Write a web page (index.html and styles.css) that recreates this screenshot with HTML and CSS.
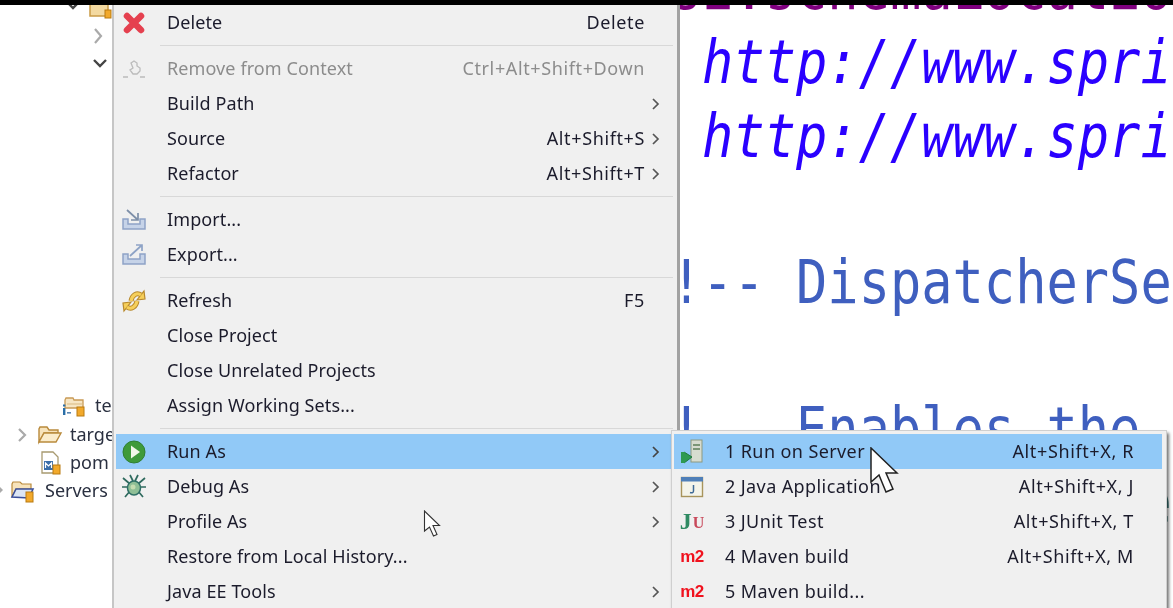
FILE: index.html
```html
<!DOCTYPE html>
<html lang="en">
<head>
<meta charset="utf-8">
<title>Eclipse context menu</title>
<link rel="stylesheet" href="styles.css">
</head>
<body>
<div class="app">
  <div class="topbar"></div>
  <div class="main">
    <aside class="tree">
      <div class="tree-first">
        <svg class="chev" width="14" height="10" viewBox="0 0 14 10"><path d="M2 1l5 5 5-5" fill="none" stroke="#444" stroke-width="2.4"/></svg>
        <svg width="24" height="18" viewBox="0 0 24 18"><path d="M1 1h18v13H1z" fill="#f3d9a0" stroke="#c99a45" stroke-width="1.5"/><rect x="16" y="8" width="6" height="8" fill="#f2a92b" stroke="#b97a10"/></svg>
      </div>
      <div class="tree-row ind-a"><svg width="12" height="18" viewBox="0 0 12 18"><path d="M3 2l6 7-6 7" fill="none" stroke="#aaa" stroke-width="2.2"/></svg></div>
      <div class="tree-row ind-a"><svg width="16" height="12" viewBox="0 0 16 12"><path d="M2 2l6 6 6-6" fill="none" stroke="#444" stroke-width="2.4"/></svg></div>
      <div class="tree-row tree-te">
        <svg width="26" height="22" viewBox="0 0 26 22"><path d="M3 5l1-2h7l1 2h9v8H3z" fill="#f7e6c4" stroke="#c99a55" stroke-width="1.3"/><path d="M5 9h16" stroke="#d9b980"/><rect x="1" y="13" width="2.4" height="7" fill="#2a6fa8"/><rect x="1" y="9.5" width="2.4" height="2" fill="#2a6fa8"/><rect x="5" y="17" width="4" height="1.6" fill="#5b86b0"/><rect x="15" y="12" width="7" height="9" fill="#f2a92b" stroke="#b97a10"/></svg>
        <span>te</span>
      </div>
      <div class="tree-row tree-target">
        <svg width="12" height="16" viewBox="0 0 12 16"><path d="M2 2l6 6-6 6" fill="none" stroke="#aaa" stroke-width="2.2"/></svg>
        <svg width="26" height="20" viewBox="0 0 26 20"><path d="M2 17V4l1-2h7l2 3h9v3H7z" fill="#f7e3bb" stroke="#b98a3c" stroke-width="1.4"/><path d="M2 17l5-9h17l-5 9z" fill="#fbeccb" stroke="#b98a3c" stroke-width="1.4"/></svg>
        <span>targe</span>
      </div>
      <div class="tree-row tree-pom">
        <svg width="20" height="24" viewBox="0 0 20 24"><path d="M1 1h11l5 5v16H1z" fill="#fff" stroke="#a89a70" stroke-width="1.3"/><rect x="3" y="10" width="9" height="9" fill="#3a6ea8"/><path d="M4.500 17v-5l3 3 3-3v5" fill="none" stroke="#fff" stroke-width="1.200"/><rect x="12" y="14" width="7" height="9" fill="#f2a92b" stroke="#b97a10"/></svg>
        <span>pom</span>
      </div>
      <div class="tree-row tree-servers">
        <svg width="35" height="24" viewBox="0 0 35 24"><path d="M0 8l3 3-3 3z" fill="#aaa"/><path d="M12 18V5l1-2h7l2 2h9v5H16z" fill="#f7e3bb" stroke="#b98a3c" stroke-width="1.200"/><path d="M12 18l4-8h17l-4 9z" fill="#dce6f5" stroke="#3a4f9a" stroke-width="1.600"/><rect x="26" y="13" width="7" height="10" fill="#f2a92b" stroke="#b97a10"/></svg>
        <span>Servers</span>
      </div>
    </aside>

    <nav class="menu">
      <div class="item"><span class="ico"><svg width="24" height="24" viewBox="0 0 24 24"><path d="M5 5l14 14M19 5L5 19" stroke="#e5404f" stroke-width="6.500" stroke-linecap="round"/></svg></span><span class="label">Delete</span><span class="keys">Delete</span><span class="more"></span></div>
      <div class="sep"></div>
      <div class="item off"><span class="ico"><svg width="24" height="22" viewBox="0 0 24 22"><path d="M9 5l3-2 3 2v3l3 2v3l-3 3h-4l-3-4 3-2z" fill="none" stroke="#bbb" stroke-width="1.300"/><path d="M1 19h5M18 19h5" stroke="#bbb" stroke-width="1.300"/></svg></span><span class="label">Remove from Context</span><span class="keys">Ctrl+Alt+Shift+Down</span><span class="more"></span></div>
      <div class="item"><span class="ico"></span><span class="label">Build Path</span><span class="keys"></span><span class="more"><svg class="arrow" width="10" height="14" viewBox="0 0 10 14"><path d="M2 2l5 5-5 5" fill="none" stroke="#555" stroke-width="1.700"/></svg></span></div>
      <div class="item"><span class="ico"></span><span class="label">Source</span><span class="keys">Alt+Shift+S</span><span class="more"><svg class="arrow" width="10" height="14" viewBox="0 0 10 14"><path d="M2 2l5 5-5 5" fill="none" stroke="#555" stroke-width="1.700"/></svg></span></div>
      <div class="item"><span class="ico"></span><span class="label">Refactor</span><span class="keys">Alt+Shift+T</span><span class="more"><svg class="arrow" width="10" height="14" viewBox="0 0 10 14"><path d="M2 2l5 5-5 5" fill="none" stroke="#555" stroke-width="1.700"/></svg></span></div>
      <div class="sep"></div>
      <div class="item"><span class="ico"><svg width="26" height="26" viewBox="0 0 26 26"><path d="M2 12h5v5h12v-5h5v10H2z" fill="#c6d3e8" stroke="#8ea3c6" stroke-width="1.500"/><path d="M6 3l11 10M17 6v7h-7" fill="none" stroke="#7d8fa8" stroke-width="1.700"/></svg></span><span class="label">Import...</span><span class="keys"></span><span class="more"></span></div>
      <div class="item"><span class="ico"><svg width="26" height="26" viewBox="0 0 26 26"><path d="M2 12h5v5h12v-5h5v10H2z" fill="#c6d3e8" stroke="#8ea3c6" stroke-width="1.500"/><path d="M9 14L21 3M15 3h6v6" fill="none" stroke="#8ea3c6" stroke-width="1.700"/></svg></span><span class="label">Export...</span><span class="keys"></span><span class="more"></span></div>
      <div class="sep"></div>
      <div class="item"><span class="ico"><svg width="26" height="26" viewBox="0 0 26 26"><path d="M10 13C11 7 16 4 20 7M16 13C15 19 10 22 6 19" fill="none" stroke="#b8892c" stroke-width="5"/><path d="M16 12l8-1-1-8zM10 14l-8 1 1 8z" fill="#f6cf5a" stroke="#b8892c" stroke-width="1.200"/><path d="M10 13C11 7 16 4 20 7M16 13C15 19 10 22 6 19" fill="none" stroke="#f6cf5a" stroke-width="3"/></svg></span><span class="label">Refresh</span><span class="keys">F5</span><span class="more"></span></div>
      <div class="item"><span class="ico"></span><span class="label">Close Project</span><span class="keys"></span><span class="more"></span></div>
      <div class="item"><span class="ico"></span><span class="label">Close Unrelated Projects</span><span class="keys"></span><span class="more"></span></div>
      <div class="item"><span class="ico"></span><span class="label">Assign Working Sets...</span><span class="keys"></span><span class="more"></span></div>
      <div class="sep"></div>
      <div class="item active"><span class="ico"><svg width="24" height="24" viewBox="-1 0 24 24"><circle cx="11" cy="12" r="11" fill="#3f9a3a" stroke="#2f7f34"/><path d="M8 5.500l9 6.500-9 6.500z" fill="#f2f7e8"/></svg></span><span class="label">Run As</span><span class="keys"></span><span class="more"><svg class="arrow" width="10" height="14" viewBox="0 0 10 14"><path d="M2 2l5 5-5 5" fill="none" stroke="#444" stroke-width="1.700"/></svg></span></div>
      <div class="item"><span class="ico"><svg width="26" height="26" viewBox="0 0 26 26"><path d="M2 4l7 6M24 4l-7 6M1 13h6M25 13h-6M4 23l5-6M22 23l-5-6M9 1l3 6M17 1l-3 6" stroke="#2f6a5e" stroke-width="1.700"/><ellipse cx="13" cy="14" rx="6.500" ry="7" fill="#8fbf96" stroke="#2f6f66" stroke-width="1.500"/><circle cx="12" cy="13" r="2.500" fill="#c5dcb0"/></svg></span><span class="label">Debug As</span><span class="keys"></span><span class="more"><svg class="arrow" width="10" height="14" viewBox="0 0 10 14"><path d="M2 2l5 5-5 5" fill="none" stroke="#555" stroke-width="1.700"/></svg></span></div>
      <div class="item"><span class="ico"></span><span class="label">Profile As</span><span class="keys"></span><span class="more"><svg class="arrow" width="10" height="14" viewBox="0 0 10 14"><path d="M2 2l5 5-5 5" fill="none" stroke="#555" stroke-width="1.700"/></svg></span></div>
      <div class="item"><span class="ico"></span><span class="label">Restore from Local History...</span><span class="keys"></span><span class="more"></span></div>
      <div class="item"><span class="ico"></span><span class="label">Java EE Tools</span><span class="keys"></span><span class="more"><svg class="arrow" width="10" height="14" viewBox="0 0 10 14"><path d="M2 2l5 5-5 5" fill="none" stroke="#555" stroke-width="1.700"/></svg></span></div>
    </nav>

    <section class="editor">
      <pre class="code"><span class="attr">xsi:schemaLocation="</span>
<span class="val">  http://www.springframework.org/schema/mvc</span>
<span class="val">  http://www.springframework.org/schema/beans</span>

<span class="cmt">&lt;!-- DispatcherServlet Context --&gt;</span>

<span class="cmt">&lt;!-- Enables the Spring MVC --&gt;</span>
<span class="tag">&lt;annotation-driven /&gt;</span></pre>
    </section>
  </div>

  <div class="submenu">
    <div class="item active"><span class="ico"><svg width="24" height="26" viewBox="0 0 24 26"><rect x="11" y="1" width="11" height="22" fill="#d7dccf" stroke="#8d9a80"/><path d="M13 6h7M13 10h7" stroke="#5f7f5a" stroke-width="1.700"/><path d="M4 13l8 5-8 6z" fill="#2f9a52" stroke="#1f7a3e"/><rect x="1" y="13" width="4" height="11" fill="#2f9a52"/></svg></span><span class="label">1 Run on Server</span><span class="keys">Alt+Shift+X, R</span><span class="more"></span></div>
    <div class="item"><span class="ico"><svg width="24" height="22" viewBox="0 0 24 22"><rect x="1.500" y="1.500" width="21" height="19" fill="#f4f4ea" stroke="#a8945c" stroke-width="1.400"/><rect x="1" y="1" width="22" height="4.500" fill="#4f7fb8"/><path d="M13.500 9v6c0 2-2 2-3.500 1.500" fill="none" stroke="#3f6a96" stroke-width="1.500"/></svg></span><span class="label">2 Java Application</span><span class="keys">Alt+Shift+X, J</span><span class="more"></span></div>
    <div class="item"><span class="ico ju"><b class="ju-j">J</b><b class="ju-u">U</b></span><span class="label">3 JUnit Test</span><span class="keys">Alt+Shift+X, T</span><span class="more"></span></div>
    <div class="item"><span class="ico m2">m2</span><span class="label">4 Maven build</span><span class="keys">Alt+Shift+X, M</span><span class="more"></span></div>
    <div class="item"><span class="ico m2">m2</span><span class="label">5 Maven build...</span><span class="keys"></span><span class="more"></span></div>
  </div>

  <svg class="cursor cursor-big" width="30" height="50" viewBox="0 0 30 50"><path d="M2 1v34l8-7 7 17 7-3-7-16h11z" fill="#fff" stroke="#222" stroke-width="1.500"/></svg>
  <svg class="cursor cursor-small" width="18" height="27" viewBox="0 0 18 27"><path d="M1.500 1v20l5-4 4 9 3.500-1.500-4-9h6.500z" fill="#fff" stroke="#333" stroke-width="1.100"/></svg>
</div>
</body>
</html>
```
FILE: styles.css
```css
* { box-sizing: border-box; }
html, body { margin: 0; padding: 0; background: #fff; }
body { overflow: hidden; }

.app {
  position: relative;
  width: 1173px;
  height: 608px;
  overflow: hidden;
  font-family: "Noto Sans", "Open Sans", sans-serif;
  font-size: 18px;
  color: #1b1b2b;
  filter: blur(0.35px);
}

.topbar { height: 5px; background: #000; position: relative; z-index: 3; }

.main { display: flex; height: 603px; overflow: hidden; }

/* project tree */
.tree { flex: none; width: 112px; overflow: hidden; background: #fff; white-space: nowrap; color: #2a3040; }
.tree svg { flex: none; }
.tree-first { height: 19px; display: flex; align-items: flex-end; gap: 9px; margin-top: -2px; padding-left: 66px; overflow: hidden; }
.tree-first .chev { margin-bottom: 10px; }
.tree-first svg:last-child { margin-bottom: 2px; }
.tree-row { height: 28px; display: flex; align-items: center; }
.tree-row span { padding-bottom: 2px; }
.ind-a { padding-left: 92px; }
.tree-te { margin-top: 314px; padding-left: 62px; gap: 7px; }
.tree-target { margin-top: 1px; padding-left: 17px; gap: 8px; }
.tree-target span { margin-left: -1px; }
.tree-pom { padding-left: 41px; gap: 9px; }
.tree-servers { gap: 10px; }

/* menus */
.menu {
  flex: none;
  width: 568px;
  background: #f0f0f0;
  border-left: 2px solid #c6c6c6;
  border-right: 3px solid #a2a2a2;
  padding: 0 4px 0 2px;
}
.item { height: 35px; display: flex; align-items: center; white-space: nowrap; }
.item.active { background: #91c9f7; }
.item.off { color: #8c8c8c; }
.ico { flex: none; width: 36px; height: 35px; margin-right: 15px; display: flex; align-items: center; justify-content: center; }
.label { flex: 1; letter-spacing: 0.1px; padding-bottom: 2px; }
.keys { flex: none; letter-spacing: 0.62px; padding-bottom: 2px; }
.more { flex: none; width: 28px; display: flex; justify-content: flex-start; padding-left: 6px; }
.arrow { display: block; }
.sep { height: 11px; margin-left: 44px; display: flex; align-items: center; }
.sep::before { content: ""; flex: 1; height: 1.5px; background: #d8d8d8; }

.submenu {
  position: absolute;
  left: 671px;
  top: 430px;
  width: 496px;
  height: 190px;
  background: #f0f0f0;
  border: 1px solid #cfcfcf;
  padding: 3px 4px 0 2px;
  box-shadow: 2px 3px 3px rgba(0, 0, 0, 0.55);
  z-index: 2;
}
.submenu .label { letter-spacing: 0.4px; }
.ju { font-family: "Liberation Serif", serif; font-size: 24px; gap: 1px; align-items: center; }
.ju-j { color: #2f8a62; }
.ju-u { color: #c8485a; font-size: 16px; margin-top: 3px; }
.m2 { font-family: "Liberation Sans", sans-serif; font-weight: 700; font-size: 17px; color: #f0121e; letter-spacing: -0.5px; }

/* editor */
.editor { flex: 1; min-width: 0; overflow: hidden; background: #fff; }
.code {
  margin: -52px 0 0 -40.5px;
  font-family: "DejaVu Sans Mono", monospace;
  font-size: 52px;
  line-height: 63.8px;
  transform: scaleY(1.15);
  transform-origin: 0 0;
}
.attr { color: #7f007f; }
.val { color: #2a00ff; font-style: italic; }
.cmt { color: #3f5fbf; }
.tag { color: #3f7f7f; }

/* pointers over everything */
.cursor { position: absolute; z-index: 4; }
.cursor-big { left: 869px; top: 447px; }
.cursor-small { left: 423px; top: 510px; }
```
